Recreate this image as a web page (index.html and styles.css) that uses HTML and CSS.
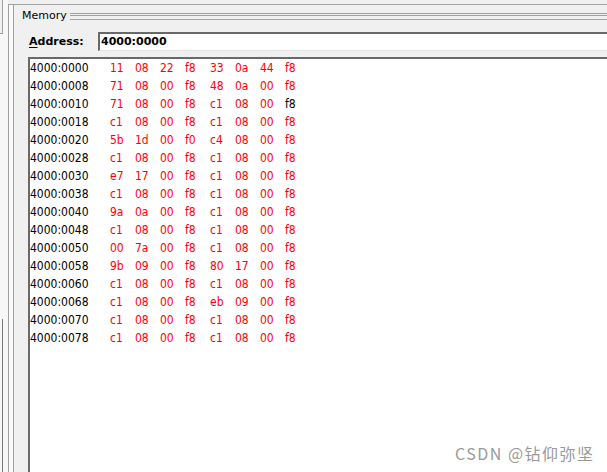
FILE: index.html
```html
<!DOCTYPE html>
<html lang="en">
<head>
  <meta charset="UTF-8">
  <title>Memory</title>

  <link rel="stylesheet" href="styles.css">
</head>
<body>

	<div class="window">

		<div class="side">
			<div class="side-tab"></div>
			<div class="side-rail"></div>
		</div>

		<div class="frame">
			<div class="group">

				<div class="group-head">
					<span class="group-title">Memory</span>
					<span class="group-rule"></span>
				</div>

				<div class="addr-bar">
					<label class="addr-label"><u>A</u>ddress:</label>
					<div class="addr-input">4000:0000</div>
				</div>

				<div class="dump">
					<div class="rows">
						<div class="row"><span class="addr">4000:0000</span><span>11</span><span>08</span><span>22</span><span>f8</span><span>33</span><span>0a</span><span>44</span><span>f8</span></div>
						<div class="row"><span class="addr">4000:0008</span><span>71</span><span>08</span><span>00</span><span>f8</span><span>48</span><span>0a</span><span>00</span><span>f8</span></div>
						<div class="row"><span class="addr">4000:0010</span><span>71</span><span>08</span><span>00</span><span>f8</span><span>c1</span><span>08</span><span>00</span><span class="same">f8</span></div>
						<div class="row"><span class="addr">4000:0018</span><span>c1</span><span>08</span><span>00</span><span>f8</span><span>c1</span><span>08</span><span>00</span><span>f8</span></div>
						<div class="row"><span class="addr">4000:0020</span><span>5b</span><span>1d</span><span>00</span><span>f0</span><span>c4</span><span>08</span><span>00</span><span>f8</span></div>
						<div class="row"><span class="addr">4000:0028</span><span>c1</span><span>08</span><span>00</span><span>f8</span><span>c1</span><span>08</span><span>00</span><span>f8</span></div>
						<div class="row"><span class="addr">4000:0030</span><span>e7</span><span>17</span><span>00</span><span>f8</span><span>c1</span><span>08</span><span>00</span><span>f8</span></div>
						<div class="row"><span class="addr">4000:0038</span><span>c1</span><span>08</span><span>00</span><span>f8</span><span>c1</span><span>08</span><span>00</span><span>f8</span></div>
						<div class="row"><span class="addr">4000:0040</span><span>9a</span><span>0a</span><span>00</span><span>f8</span><span>c1</span><span>08</span><span>00</span><span>f8</span></div>
						<div class="row"><span class="addr">4000:0048</span><span>c1</span><span>08</span><span>00</span><span>f8</span><span>c1</span><span>08</span><span>00</span><span>f8</span></div>
						<div class="row"><span class="addr">4000:0050</span><span>00</span><span>7a</span><span>00</span><span>f8</span><span>c1</span><span>08</span><span>00</span><span>f8</span></div>
						<div class="row"><span class="addr">4000:0058</span><span>9b</span><span>09</span><span>00</span><span>f8</span><span>80</span><span>17</span><span>00</span><span>f8</span></div>
						<div class="row"><span class="addr">4000:0060</span><span>c1</span><span>08</span><span>00</span><span>f8</span><span>c1</span><span>08</span><span>00</span><span>f8</span></div>
						<div class="row"><span class="addr">4000:0068</span><span>c1</span><span>08</span><span>00</span><span>f8</span><span>eb</span><span>09</span><span>00</span><span>f8</span></div>
						<div class="row"><span class="addr">4000:0070</span><span>c1</span><span>08</span><span>00</span><span>f8</span><span>c1</span><span>08</span><span>00</span><span>f8</span></div>
						<div class="row"><span class="addr">4000:0078</span><span>c1</span><span>08</span><span>00</span><span>f8</span><span>c1</span><span>08</span><span>00</span><span>f8</span></div>
					</div>
				</div>

			</div>
		</div>

		<div class="watermark">CSDN @钻仰弥坚</div>

	</div>

</body>
</html>
```

FILE: styles.css
```css
	body {
		padding: 0;
		margin: 0;
		background-color: #f0f0f0;
		font-family: "DejaVu Sans", sans-serif;
		font-size: 11px;
		color: #000;
	}

	.window {
		position: relative;
		display: flex;
		width: 607px;
		height: 472px;
		overflow: hidden;
	}

	/* left strip, the edge of the neighbouring pane */
	.side {
		width: 8px;
		display: flex;
		flex-direction: column;
		background-color: #f7f7f7;
	}

	.side-tab {
		width: 2px;
		height: 33px;
		border-right: 1px solid #a0a0a0;
		border-bottom: 1px solid #a0a0a0;
		background-color: #f0f0f0;
	}

	.side-rail {
		margin-top: 285px;
		margin-left: 2px;
		flex: 1;
		border-left: 1px solid #7a7a7a;
	}

	.frame {
		flex: 1;
		display: flex;
		margin-top: 4px;
		padding-left: 4px;
		border-top: 1px solid #a0a0a0;
		border-left: 1px solid #a0a0a0;
		background-color: #fafafa;
	}

	.group {
		flex: 1;
		display: flex;
		flex-direction: column;
		border-left: 1px solid #a0a0a0;
		background-color: #f0f0f0;
	}

	.group-head {
		display: flex;
		height: 20px;
		padding-left: 8px;
		align-items: center;
	}

	.group-title {
		line-height: 13px;
	}

	.group-rule {
		flex: 1;
		align-self: flex-start;
		height: 5px;
		margin-top: 8px;
		margin-left: 3px;
		border-top: 1px solid #a0a0a0;
		border-bottom: 1px solid #a0a0a0;
		background: linear-gradient(#a0a0a0, #a0a0a0) 0 1px / 100% 1px no-repeat;
	}

	.addr-bar {
		display: flex;
		align-items: center;
		margin-top: 7px;
		padding-left: 15px;
	}

	.addr-label {
		width: 69px;
		font-weight: bold;
		line-height: 13px;
	}

	.addr-label u {
		text-decoration-thickness: 1px;
		text-underline-offset: 2px;
	}

	.addr-input {
		flex: 1;
		height: 16px;
		padding-left: 1px;
		line-height: 16px;
		font-weight: bold;
		background-color: #fff;
		border-top: 2px solid #696969;
		border-left: 2px solid #696969;
		border-bottom: 1px solid #e3e3e3;
	}

	.dump {
		flex: 1;
		margin-top: 6px;
		margin-left: 14px;
		background-color: #fff;
		border-top: 2px solid #696969;
		border-left: 2px solid #696969;
	}

	.row {
		display: grid;
		grid-template-columns: 80px repeat(8, 25px);
		height: 18px;
		line-height: 18px;
		font-size: 12px;
		font-stretch: condensed;
		color: #ff0000;
	}

	.row .addr,
	.row .same {
		color: #000;
	}

	.watermark {
		position: absolute;
		left: 455px;
		top: 443px;
		line-height: 20px;
		font-family: "Noto Sans CJK SC", sans-serif;
		font-size: 16px;
		letter-spacing: 1.5px;
		color: #999;
		white-space: nowrap;
	}
```
